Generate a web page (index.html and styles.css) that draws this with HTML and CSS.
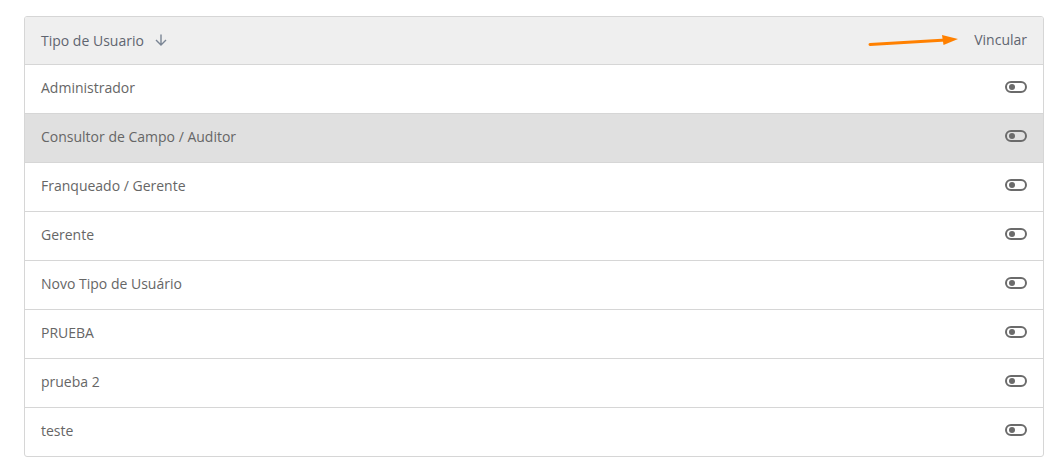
FILE: index.html
```html
<!DOCTYPE html>
<html lang="pt">
<head>
    <meta charset="UTF-8">
    <title>Tipos de Usuario</title>
    <link rel="stylesheet" href="styles.css">
</head>
<body>
    <div class="table">
        <div class="table-head">
            <div class="col-name">
                Tipo de Usuario
                <svg class="sort" width="14" height="14" viewBox="0 0 14 14">
                    <path d="M7 1.5v10.5M2 7l5 5 5-5" fill="none" stroke="#7a8594" stroke-width="1.4"/>
                </svg>
            </div>
            <div class="col-link">
                <svg class="pointer" width="92" height="14" viewBox="0 0 92 14">
                    <path d="M2 11.5L78 7" stroke="#ff8000" stroke-width="3" stroke-linecap="round"/>
                    <path d="M74 2L90 6 75.5 12z" fill="#ff8000"/>
                </svg>
                Vincular
            </div>
        </div>
        <div class="row"><span>Administrador</span><span class="toggle"></span></div>
        <div class="row active"><span>Consultor de Campo / Auditor</span><span class="toggle"></span></div>
        <div class="row"><span>Franqueado / Gerente</span><span class="toggle"></span></div>
        <div class="row"><span>Gerente</span><span class="toggle"></span></div>
        <div class="row"><span>Novo Tipo de Usuário</span><span class="toggle"></span></div>
        <div class="row"><span>PRUEBA</span><span class="toggle"></span></div>
        <div class="row"><span>prueba 2</span><span class="toggle"></span></div>
        <div class="row"><span>teste</span><span class="toggle"></span></div>
    </div>
</body>
</html>
```

FILE: styles.css
```css
body {
    margin: 0;
    padding: 16px 13px 0 24px;
    background-color: #ffffff;
    font-family: 'Open Sans', sans-serif;
    font-size: 14px;
    color: #666666;
}
.table {
    border: 1px solid #d6d6d6;
    border-radius: 3px;
    overflow: hidden;
}
.table-head {
    display: flex;
    justify-content: space-between;
    align-items: center;
    height: 45px;
    padding: 0 16px 2px;
    background-color: #efefef;
    border-bottom: 1px solid #d6d6d6;
    color: #5f6570;
}
.col-name {
    display: flex;
    align-items: center;
    gap: 10px;
    padding-top: 1px;
}
.col-link {
    display: flex;
    align-items: center;
    gap: 14px;
}
.row {
    display: flex;
    justify-content: space-between;
    align-items: center;
    height: 44px;
    padding: 0 16px 4px;
    border-bottom: 1px solid #d6d6d6;
}
.row:last-child {
    border-bottom: none;
}
.row.active {
    background-color: #e0e0e0;
}
.toggle {
    position: relative;
    width: 18px;
    height: 8px;
    border: 2px solid #6b6b6b;
    border-radius: 6px;
}
.toggle::before {
    content: "";
    position: absolute;
    left: 2px;
    top: 1px;
    width: 6px;
    height: 6px;
    border-radius: 50%;
    background-color: #6b6b6b;
}
```
